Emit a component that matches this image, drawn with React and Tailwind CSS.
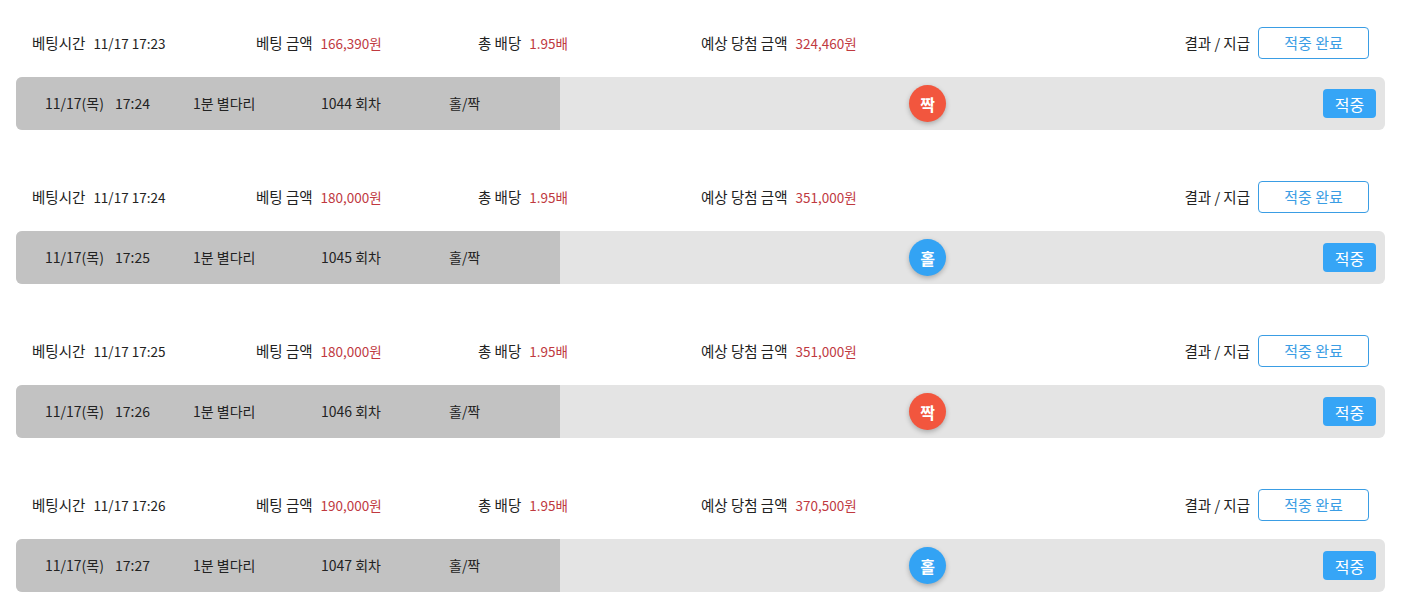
const bets = [
  { time: "11/17 17:23", amount: "166,390원", odds: "1.95배", win: "324,460원", date: "11/17(목)", clock: "17:24", round: "1044 회차", result: "짝" },
  { time: "11/17 17:24", amount: "180,000원", odds: "1.95배", win: "351,000원", date: "11/17(목)", clock: "17:25", round: "1045 회차", result: "홀" },
  { time: "11/17 17:25", amount: "180,000원", odds: "1.95배", win: "351,000원", date: "11/17(목)", clock: "17:26", round: "1046 회차", result: "짝" },
  { time: "11/17 17:26", amount: "190,000원", odds: "1.95배", win: "370,500원", date: "11/17(목)", clock: "17:27", round: "1047 회차", result: "홀" },
];

const BetRow = ({ bet }) => (
  <div className="pb-[51px]">
    <div className="flex h-8 items-center pl-8 pr-[56px] text-[14.5px] text-[#222]">
      <div className="w-[224px]">
        베팅시간<span className="ml-2 text-[13.5px]">{bet.time}</span>
      </div>
      <div className="w-[222px]">
        베팅 금액<span className="ml-2 text-[13.5px] text-[#c0393f]">{bet.amount}</span>
      </div>
      <div className="w-[223px]">
        총 배당<span className="ml-2 text-[13.5px] text-[#c0393f]">{bet.odds}</span>
      </div>
      <div className="flex-1">
        예상 당첨 금액<span className="ml-2 text-[13.5px] text-[#c0393f]">{bet.win}</span>
      </div>
      <span>결과 / 지급</span>
      <button
        type="button"
        className="ml-2 h-8 w-[111px] rounded border border-[#3a9de4] text-[15px] text-[#3a9de4]"
      >
        적중 완료
      </button>
    </div>

    <div className="ml-4 mr-10 mt-[18px] flex h-[53px] overflow-hidden rounded-md bg-[#e4e4e4] text-[14px] text-[#222]">
      <div className="flex w-[544px] items-center bg-[#c2c2c2] pl-[29px]">
        <span className="w-[70px]">{bet.date}</span>
        <span className="w-[78px]">{bet.clock}</span>
        <span className="w-[128px]">1분 별다리</span>
        <span className="w-[128px]">{bet.round}</span>
        <span>홀/짝</span>
      </div>
      <div className="flex flex-1 items-center pr-[9px] pl-[349px]">
        <span
          className={`flex h-[37px] w-[37px] items-center justify-center rounded-full text-[16px] font-bold text-white shadow-[0_2px_5px_rgba(0,0,0,0.25)] ${
            bet.result === "짝" ? "bg-[#f2563e]" : "bg-[#33a3f4]"
          }`}
        >
          {bet.result}
        </span>
        <div className="flex-1" />
        <button
          type="button"
          className="h-[29px] w-[53px] rounded bg-[#36a5f6] text-[16px] text-white"
        >
          적중
        </button>
      </div>
    </div>
  </div>
);

const App = () => (
  <div
    className="min-h-screen bg-white pt-[27px]"
    style={{ fontFamily: '"Noto Sans CJK KR", "Noto Sans", sans-serif' }}
  >
    {bets.map((bet) => (
      <BetRow key={bet.round} bet={bet} />
    ))}
  </div>
);

export default App;
